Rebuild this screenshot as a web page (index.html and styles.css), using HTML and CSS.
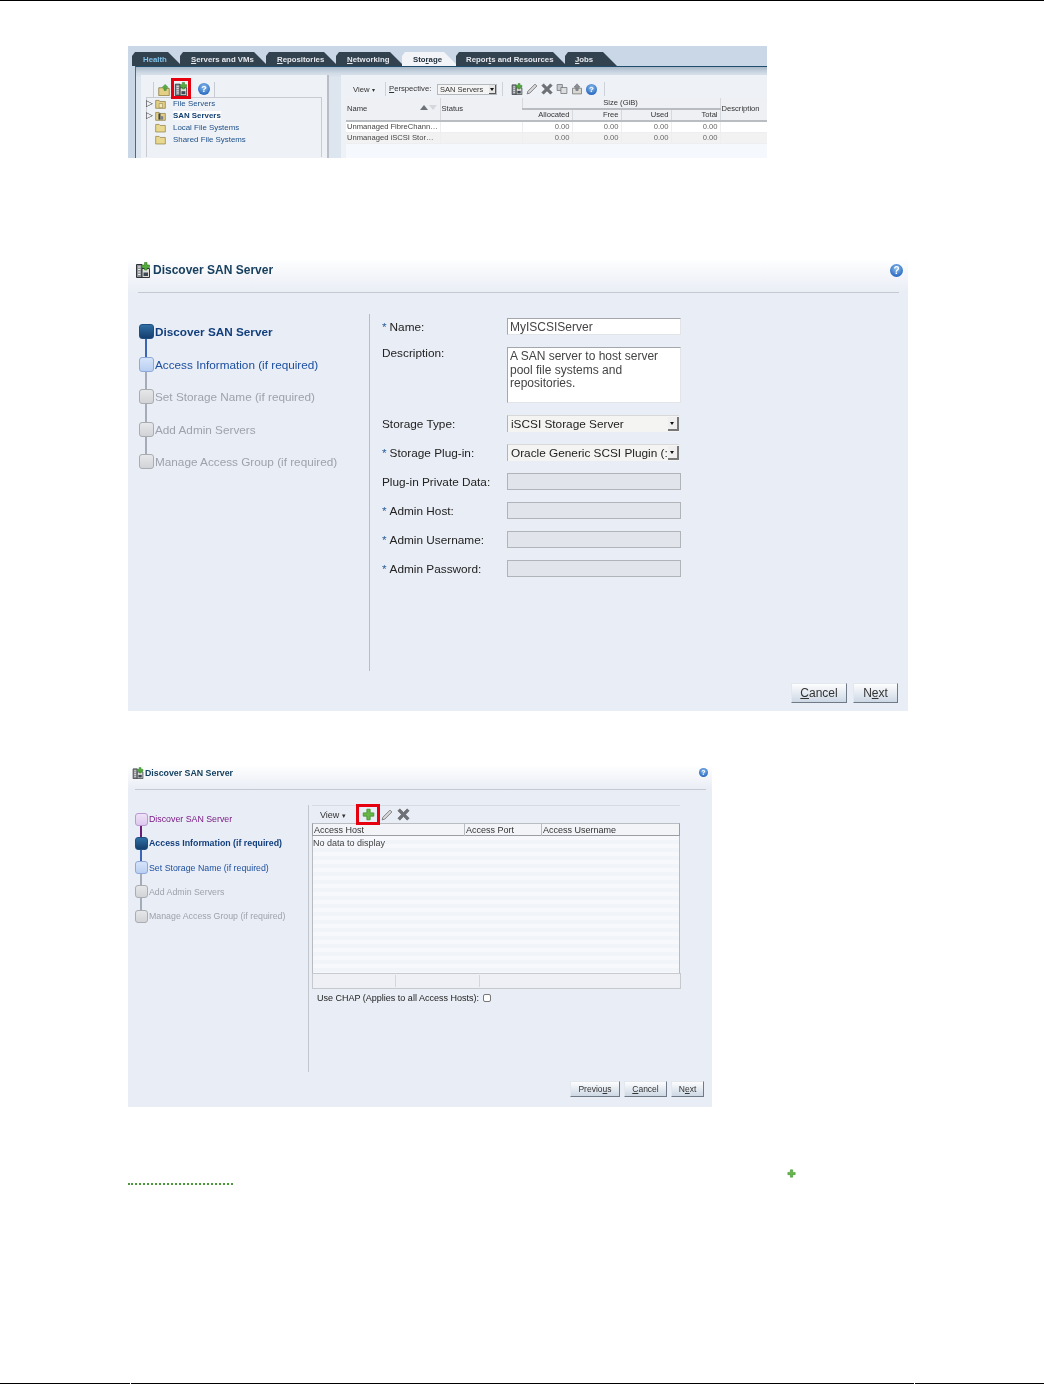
FILE: index.html
```html
<!DOCTYPE html>
<html lang="en">
<head>
<meta charset="utf-8">
<title>Discover SAN Server</title>
<link rel="stylesheet" href="styles.css">
</head>
<body>
<svg class="defs" width="0" height="0" aria-hidden="true">
  <symbol id="i-san" viewBox="0 0 16 16">
    <path d="M1.500 2.500h5.500v13H1.500z" fill="#8d9299" stroke="#2f3338"/>
    <path d="M7 6.500h7.500v9H7z" fill="#dfe0d8" stroke="#2f3338"/>
    <path d="M3 5h2.500M3 7.500h2.500M3 10h2.500M3 12.500h2.500" stroke="#eeeeee"/>
    <path d="M8.500 10.500h4.500v3.500H8.500z" fill="#3f4854"/>
    <path d="M9.500 0.500h2.500v2.500h2.500v2.500H12V8H9.500V5.500H7V3h2.500z" fill="#54ac3c" stroke="#2f7d23" stroke-width=".6"/>
  </symbol>
  <symbol id="i-filesrv" viewBox="0 0 16 16">
    <path d="M1 3.500h5l1 1.500h8v10H1z" fill="#e3cf85" stroke="#85763c"/>
    <path d="M6 8h5v6H6z" fill="#f1e7bd" stroke="#85763c" stroke-width=".7"/>
  </symbol>
  <symbol id="i-sansrv" viewBox="0 0 16 16">
    <path d="M1 3.500h5l1 1.500h8v10H1z" fill="#e3cf85" stroke="#85763c"/>
    <path d="M5 5h3v9H5z" fill="#3c4148"/>
    <path d="M8 9h4v5H8z" fill="#7b818a"/>
  </symbol>
  <symbol id="i-folder" viewBox="0 0 16 16">
    <path d="M1 3.500h5l1.500 1.500H15v9.500H1z" fill="#e9d88f" stroke="#8b7c41"/>
  </symbol>
  <symbol id="i-up" viewBox="0 0 16 16">
    <path d="M1 5h5l1 1h8v9.500H1z" fill="#e3cf85" stroke="#85763c"/>
    <path d="M9.500 .5l4 4H11v4H8v-4H5.500z" fill="#58ad3f" stroke="#2f7d23" stroke-width=".6"/>
  </symbol>
  <symbol id="i-plus" viewBox="0 0 16 16">
    <path d="M6 1.500h4v4.500h4.500v4H10v4.500H6V10H1.500V6H6z" fill="#67b849" stroke="#3f8f2c"/>
  </symbol>
  <symbol id="i-pencil" viewBox="0 0 16 16">
    <path d="M12 1.500l2.500 2.500L5 13.500l-3.500 1 1-3.500z" fill="#d8d8d8" stroke="#6e7072" stroke-width="1.100"/>
  </symbol>
  <symbol id="i-x" viewBox="0 0 16 16">
    <path d="M3.500 1L8 5.500 12.500 1 15 3.500 10.500 8l4.500 4.500-2.500 2.500L8 10.500 3.500 15 1 12.500 5.500 8 1 3.500z" fill="#6f7276" stroke="#54575a" stroke-width=".6"/>
  </symbol>
  <symbol id="i-copy" viewBox="0 0 16 16">
    <path d="M1.500 2h7v8h-7z" fill="#c9ccd0" stroke="#6e7072"/>
    <path d="M6.500 6h8v8h-8z" fill="#dcdee0" stroke="#6e7072"/>
  </symbol>
  <symbol id="i-export" viewBox="0 0 16 16">
    <path d="M2 7h12v7.500H2z" fill="#d8d8d0" stroke="#6e7072"/>
    <path d="M8 1l4 4.500H9.500V10h-3V5.500H4z" fill="#8d9094" stroke="#55585b" stroke-width=".6"/>
  </symbol>
</svg>

<main class="page">

  <section class="shot shot-one">
    <nav class="tabs">
      <span class="tab tab-health"><span class="tab-label">Health</span></span>
      <span class="tab tab-servers"><span class="tab-label"><u>S</u>ervers and VMs</span></span>
      <span class="tab tab-repos"><span class="tab-label"><u>R</u>epositories</span></span>
      <span class="tab tab-net"><span class="tab-label"><u>N</u>etworking</span></span>
      <span class="tab tab-storage"><span class="tab-label">Sto<u>r</u>age</span></span>
      <span class="tab tab-reports"><span class="tab-label">Repor<u>t</u>s and Resources</span></span>
      <span class="tab tab-jobs"><span class="tab-label"><u>J</u>obs</span></span>
    </nav>
    <div class="one-body">
      <aside class="one-left">
        <div class="one-tools">
          <svg class="ic12 tool-up"><use href="#i-up"/></svg>
          <span class="redbox redbox-one"><svg class="ic14"><use href="#i-san"/></svg></span>
          <span class="help help-one">?</span>
        </div>
        <ul class="tree">
          <li><span class="twist">▷</span><svg class="ic12"><use href="#i-filesrv"/></svg><span class="tree-label">File Servers</span></li>
          <li><span class="twist">▷</span><svg class="ic12"><use href="#i-sansrv"/></svg><span class="tree-label tree-selected">SAN Servers</span></li>
          <li><span class="twist"></span><svg class="ic12"><use href="#i-folder"/></svg><span class="tree-label">Local File Systems</span></li>
          <li><span class="twist"></span><svg class="ic12"><use href="#i-folder"/></svg><span class="tree-label">Shared File Systems</span></li>
        </ul>
      </aside>
      <div class="one-right">
        <div class="one-bar">
          <span class="one-view">View <span class="caret">▾</span></span>
          <span class="one-persp"><u>P</u>erspective:</span>
          <span class="one-select">SAN Servers<span class="one-arrow"></span></span>
          <span class="one-icons">
            <svg class="ic12"><use href="#i-san"/></svg>
            <svg class="ic12"><use href="#i-pencil"/></svg>
            <svg class="ic12"><use href="#i-x"/></svg>
            <svg class="ic12"><use href="#i-copy"/></svg>
            <svg class="ic12"><use href="#i-export"/></svg>
            <span class="help help-bar">?</span>
          </span>
        </div>
        <table class="one-table">
          <colgroup>
            <col class="c-name"><col class="c-status"><col class="c-size"><col class="c-size2"><col class="c-size"><col class="c-size2"><col>
          </colgroup>
          <thead>
            <tr>
              <th rowspan="2" class="th-left">Name<span class="sort"><i class="sort-up"></i><i class="sort-down"></i></span></th>
              <th rowspan="2" class="th-left">Status</th>
              <th colspan="4" class="th-mid">Size (GiB)</th>
              <th rowspan="2" class="th-left">Description</th>
            </tr>
            <tr><th class="th-num">Allocated</th><th class="th-num">Free</th><th class="th-num">Used</th><th class="th-num">Total</th></tr>
          </thead>
          <tbody>
            <tr><td>Unmanaged FibreChann…</td><td></td><td class="num">0.00</td><td class="num">0.00</td><td class="num">0.00</td><td class="num">0.00</td><td></td></tr>
            <tr class="alt"><td>Unmanaged iSCSI Stor…</td><td></td><td class="num">0.00</td><td class="num">0.00</td><td class="num">0.00</td><td class="num">0.00</td><td></td></tr>
          </tbody>
        </table>
        <div class="one-fill"></div>
      </div>
    </div>
  </section>

  <section class="shot shot-two">
    <header class="dlg-head">
      <svg class="ic16"><use href="#i-san"/></svg>
      <h2 class="dlg-title">Discover SAN Server</h2>
      <span class="help help-two">?</span>
    </header>
    <hr class="dlg-rule">
    <div class="dlg-main">
      <ol class="train">
        <li class="step step-current">Discover SAN Server</li>
        <li class="step step-next">Access Information (if required)</li>
        <li class="step">Set Storage Name (if required)</li>
        <li class="step">Add Admin Servers</li>
        <li class="step step-last">Manage Access Group (if required)</li>
      </ol>
      <form class="form">
        <label class="lbl"><b class="req">*</b> Name:</label>
        <div class="field field-text">MyISCSIServer</div>
        <label class="lbl lbl-top">Description:</label>
        <div class="field field-text field-area">A SAN server to host server pool file systems and repositories.</div>
        <label class="lbl">Storage Type:</label>
        <div class="field field-select"><span class="select-text">iSCSI Storage Server</span><span class="select-arrow"></span></div>
        <label class="lbl"><b class="req">*</b> Storage Plug-in:</label>
        <div class="field field-select"><span class="select-text">Oracle Generic SCSI Plugin (:</span><span class="select-arrow"></span></div>
        <label class="lbl">Plug-in Private Data:</label>
        <div class="field field-off"></div>
        <label class="lbl"><b class="req">*</b> Admin Host:</label>
        <div class="field field-off"></div>
        <label class="lbl"><b class="req">*</b> Admin Username:</label>
        <div class="field field-off"></div>
        <label class="lbl"><b class="req">*</b> Admin Password:</label>
        <div class="field field-off"></div>
      </form>
    </div>
    <footer class="actions">
      <button class="btn btn-cancel" type="button"><u>C</u>ancel</button>
      <button class="btn btn-next" type="button">N<u>e</u>xt</button>
    </footer>
  </section>

  <section class="shot shot-three">
    <header class="dlg-head">
      <svg class="ic12"><use href="#i-san"/></svg>
      <h2 class="dlg-title">Discover SAN Server</h2>
      <span class="help help-three">?</span>
    </header>
    <hr class="dlg-rule">
    <div class="dlg-main">
      <ol class="train">
        <li class="step step-visited">Discover SAN Server</li>
        <li class="step step-current">Access Information (if required)</li>
        <li class="step step-next">Set Storage Name (if required)</li>
        <li class="step">Add Admin Servers</li>
        <li class="step step-last">Manage Access Group (if required)</li>
      </ol>
      <div class="access">
        <div class="access-bar">
          <span class="access-view">View <span class="caret">▾</span></span>
          <span class="redbox redbox-three"><svg class="ic13"><use href="#i-plus"/></svg></span>
          <svg class="ic12 bar-pencil"><use href="#i-pencil"/></svg>
          <svg class="ic13 bar-x"><use href="#i-x"/></svg>
        </div>
        <div class="access-head">
          <span class="access-th">Access Host</span>
          <span class="access-th">Access Port</span>
          <span class="access-th">Access Username</span>
        </div>
        <div class="access-body">No data to display</div>
        <div class="access-foot"><span></span><span></span><span></span></div>
        <div class="chap">Use CHAP (Applies to all Access Hosts):<span class="check"></span></div>
      </div>
    </div>
    <footer class="actions">
      <button class="btn btn-prev" type="button">Previo<u>u</u>s</button>
      <button class="btn btn-cancel" type="button"><u>C</u>ancel</button>
      <button class="btn btn-next" type="button">N<u>e</u>xt</button>
    </footer>
  </section>

  <div class="note">
    <span class="note-link"></span>
    <svg class="note-plus"><use href="#i-plus"/></svg>
  </div>

  <footer class="page-foot"><span></span><span></span><span></span></footer>
</main>
</body>
</html>
```
FILE: styles.css
```css
* { box-sizing: border-box; }
html, body { margin: 0; padding: 0; background: #fff; }
body { font-family: "Liberation Sans", Arial, sans-serif; color: #222; overflow: hidden; }
.defs { position: absolute; }
.page { height: 1384px; border-top: 1px solid #000; display: flex; flex-direction: column; position: relative; }
.shot { margin-left: 128px; flex: none; overflow: hidden; background: #e9edf5; }
ul, ol { list-style: none; margin: 0; padding: 0; }
svg { display: block; flex: none; }
.ic12 { width: 12px; height: 12px; }
.ic13 { width: 13px; height: 13px; }
.ic14 { width: 14px; height: 14px; }
.ic16 { width: 16px; height: 16px; }

.help { display: block; flex: none; border-radius: 50%; color: #fff; font-weight: 700; text-align: center;
  background: radial-gradient(circle at 50% 35%, #8fc0ee, #2f6fc4 70%, #1f4f9a); }
.help-one { width: 12px; height: 12px; font-size: 9px; line-height: 12px; margin: 1px 0 0 7px; }
.help-bar { width: 11px; height: 11px; font-size: 8px; line-height: 11px; }
.help-two { width: 13px; height: 13px; font-size: 10px; line-height: 13px; margin-left: auto; }
.help-three { width: 9px; height: 9px; font-size: 7px; line-height: 9px; margin-left: auto; }
.redbox { display: flex; align-items: center; justify-content: center; border: 3px solid #e6000f; flex: none; }
.caret { font-size: .8em; }

/* first screenshot */
.shot-one { width: 639px; height: 112px; margin-top: 45px; background: #c9d7e7; filter: blur(.35px); }
.tabs { height: 20px; padding: 6px 0 0 4px; display: flex; }
.tab { height: 14px; background: #33424f; color: #e6e9ee; font-size: 7.800px; font-weight: 700; line-height: 16px; margin-left: -2px;
  clip-path: polygon(0 100%, 0 4px, 3px 0, calc(100% - 14px) 0, 100% 100%); }
.tab-label { display: block; }
.tab-health { width: 50px; padding-left: 11px; margin-left: 0; color: #7fc2ea; }
.tab-servers { width: 88px; padding-left: 11px; }
.tab-repos { width: 72px; padding-left: 11px; }
.tab-net { width: 68px; padding-left: 11px; }
.tab-storage { width: 56px; padding-left: 11px; background: #f2f4f7; color: #22303c; }
.tab-reports { width: 111px; padding-left: 10px; }
.tab-jobs { width: 52px; padding-left: 10px; }
.tab u, .btn u, .one-persp u { text-underline-offset: 1px; }
.one-body { height: 92px; margin-left: 7px; padding: 8px 0 0 5px; display: flex; border-top: 1px solid #1f4d6e; border-left: 1px solid #3f6d8a;
  background: linear-gradient(#a9b8c7, #cfdae6 6px, #dde5ee 10px); }
.one-left { width: 188px; margin-right: 12px; background: #eef1f6; border-right: 2px solid #b9bec6; padding: 4px 0 0 5px; }
.one-tools { height: 15px; width: 62px; margin: 3px 0 0 7px; display: flex; align-items: flex-start; padding-left: 4px; border-left: 1px solid #c8ccd2; border-right: 1px solid #c8ccd2; }
.tool-up { margin-top: 2px; }
.redbox-one { width: 20px; height: 21px; margin: -4px 0 0 1px; position: relative; z-index: 1; }
.tree { background: #eef1f6; height: 60px; border-top: 1px solid #c8ccd2; border-left: 1px solid #c8ccd2; border-right: 1px solid #c8ccd2; margin-right: 5px; font-size: 7.900px; color: #1c4f88; }
.tree li { height: 12px; display: flex; align-items: center; margin-left: -1px; }
.tree li:first-child { margin-top: -1px; }
.twist { width: 7px; font-size: 8.500px; color: #333; line-height: 12px; flex: none; }
.tree .ic12 { width: 11px; height: 11px; margin-left: 2px; }
.tree-label { margin-left: 7px; white-space: nowrap; }
.tree-selected { font-weight: 700; color: #123f70; background: #fff; }
.one-right { flex: 1; background: #eef1f6; min-width: 0; }
.one-bar { height: 23px; display: flex; align-items: center; padding: 5px 0 0 12px; font-size: 7.700px; color: #333; }
.one-view { width: 32px; }
.one-persp { width: 52px; padding-left: 3px; border-left: 1px solid #cdd2d9; line-height: 14px; white-space: nowrap; }
.one-select { width: 60px; height: 11px; background: #f4f4f4; border: 1px solid #b5b8bc; font-size: 7.500px; line-height: 9px; padding-left: 2px; position: relative; white-space: nowrap; }
.one-arrow { position: absolute; right: 0; top: 0; width: 7px; height: 9px; background: #e6e6e6; border-right: 1px solid #555; border-bottom: 1px solid #555; }
.one-arrow::after { content: ""; position: absolute; left: 1px; top: 3px; border: 2px solid transparent; border-top: 3px solid #111; }
.one-icons { display: flex; align-items: center; gap: 3px; margin-left: 5px; padding: 0 7px 0 8px; border-left: 1px solid #cdd2d9; border-right: 1px solid #cdd2d9; height: 14px; }
.one-table { width: 422px; margin-left: 5px; border-collapse: collapse; table-layout: fixed; font-size: 7.600px; color: #444; }
.c-name { width: 94px; } .c-status { width: 82px; } .c-size { width: 50px; } .c-size2 { width: 49px; }
.one-table th { font-weight: 400; background: #eef0f4; padding: 0 2px 0 1px; color: #333; border-bottom: 2px solid #b9bcc1; white-space: nowrap; height: 11px; line-height: 10px; }
.one-table th + th { border-left: 1px solid #d5d8dc; }
.th-left { text-align: left; }
.th-mid { text-align: center; }
.th-num { text-align: right; }
.sort { float: right; display: flex; gap: 1px; margin: 1px 1px 0 0; }
.sort i { display: block; border: 4px solid transparent; border-top: 0; border-bottom: 5px solid #6d7278; }
.sort i.sort-down { border-bottom: 0; border-top: 5px solid #d4d7db; }
.one-table td { height: 11px; line-height: 10px; padding: 0 2px 0 1px; background: #fff; white-space: nowrap; overflow: hidden; border-bottom: 1px solid #eceef1; }
.one-table td + td { border-left: 1px solid #eceef0; }
.one-table .alt td { background: #f2f2f2; }
.num { text-align: right; color: #666; }
.one-fill { height: 16px; margin-left: 5px; background: #f5f8fc; }

/* wizard dialogs */
.dlg-head { display: flex; align-items: center; background: linear-gradient(#fff, #e9edf5); }
.dlg-title { margin: 0; font-weight: 700; color: #17405f; white-space: nowrap; }
.dlg-rule { border: 0; height: 1px; margin: 0; background: #c6cad0; }
.dlg-main { display: flex; }
.train { position: relative; flex: none; }
.step { display: flex; align-items: center; color: #9ea3ab; position: relative; white-space: nowrap; }
.step::before { content: ""; display: block; flex: none; border: 1px solid #a9acb1; border-radius: 3px; background: linear-gradient(#e6e7e9, #d2d3d6); position: relative; z-index: 1; }
.step::after { content: ""; position: absolute; background: #a5acb7; }
.step-last::after { display: none; }
.step-current { color: #123f7d; font-weight: 700; }
.step-current::before { background: linear-gradient(#2f6ea3, #143f6e); border-color: #1f4f82; }
.step-current::after { background: #3a66b5; }
.step-next { color: #1c4fa0; }
.step-next::before { background: linear-gradient(#d6e4fa, #b9cff2); border-color: #8ea9d8; }
.step-visited { color: #7a1a86; }
.step-visited::before { background: linear-gradient(#efe2f7, #dcc8ee); border-color: #b79ad0; }
.step-visited::after { background: #6d1a78; }
.btn { font-family: inherit; color: #333; padding: 0; border: 1px solid #e3e8ef; border-right-color: #6f7a86; border-bottom-color: #6f7a86;
  background: linear-gradient(#fdfdfe, #cdd8e5); }
.actions { display: flex; justify-content: flex-end; }

/* second screenshot */
.shot-two { width: 780px; height: 453px; margin-top: 100px; filter: blur(.2px); }
.shot-two .dlg-head { height: 34px; padding: 0 5px 10px 7px; gap: 2px; }
.shot-two .dlg-title { font-size: 12px; }
.shot-two .dlg-rule { margin: 0 9px 0 10px; }
.shot-two .dlg-main { margin-top: 21px; height: 357px; }
.shot-two .train { width: 241px; padding: 1.500px 0 0 11px; font-size: 11.750px; }
.shot-two .step { height: 32.500px; gap: 1px; }
.shot-two .step::before { width: 13px; height: 13px; }
.shot-two .step::after { left: 5.500px; top: 22px; width: 2px; height: 22px; }
.form { flex: 1; border-left: 1px solid #b9bdc3; padding: 4px 0 0 12px; display: grid; grid-template-columns: 125px 174px; grid-template-rows: 17px 56px repeat(6, 17px); row-gap: 12px; align-content: start; font-size: 11.800px; }
.lbl { display: flex; align-items: center; gap: 3px; white-space: nowrap; color: #222; }
.lbl-top { align-items: flex-start; margin-top: -1px; }
.req { color: #2a5f9e; font-weight: 400; }
.field { font-size: 12px; color: #444; }
.field-text { background: #fff; border: 1px solid #e2e4e8; border-top-color: #a3a6aa; border-left-color: #a3a6aa; padding: 1px 2px 0; line-height: 15px; }
.field-area { line-height: 13.500px; padding: 2px; }
.field-select { width: 172px; display: flex; align-items: center; background: #f4f4f2; border-left: 1px solid #b2b4b8; border-top: 1px solid #d8d8d8; padding-left: 3px; color: #222; font-size: 11.800px; }
.select-text { flex: 1; white-space: nowrap; min-width: 0; }
.select-arrow { flex: none; width: 11px; height: 14px; background: #efefef; border-right: 2px solid #777; border-bottom: 2px solid #777; position: relative; }
.select-arrow::after { content: ""; position: absolute; left: 2px; top: 5px; border: 2.500px solid transparent; border-top: 3px solid #111; }
.field-off { background: #e1e4ea; border: 1px solid #b0b3b7; }
.shot-two .actions { margin-top: 12px; padding-right: 10px; gap: 6px; }
.shot-two .btn { height: 20px; font-size: 12px; }
.shot-two .btn-cancel { width: 56px; }
.shot-two .btn-next { width: 45px; }

/* third screenshot */
.shot-three { width: 584px; height: 342px; margin-top: 54px; filter: blur(.3px); }
.shot-three .dlg-head { height: 24px; padding: 0 4px 9px 4px; gap: 1px; }
.shot-three .dlg-title { font-size: 8.800px; }
.shot-three .dlg-rule { margin: 0 6px 0 7px; }
.shot-three .dlg-main { margin-top: 15px; height: 267px; }
.shot-three .train { width: 180px; padding: 2px 0 0 7px; font-size: 8.800px; }
.shot-three .step { height: 24.250px; gap: 0; }
.shot-three .step::before { width: 11px; height: 11px; margin-right: 1px; }
.shot-three .step::after { left: 4.500px; top: 17px; width: 2px; height: 15px; }
.access { flex: 1; border-left: 1px solid #c3c7cd; padding-left: 3px; font-size: 9px; color: #333; }
.access-bar { width: 368px; height: 18px; border-top: 1px solid #d7dbe1; display: flex; align-items: center; padding-left: 8px; font-size: 9px; }
.access-view { width: 36px; }
.redbox-three { width: 24px; height: 21px; position: relative; z-index: 1; }
.bar-pencil { margin-left: 1px; }
.bar-x { margin-left: 4px; }
.access-head { width: 368px; height: 13px; display: grid; grid-template-columns: 151px 77px 1fr; background: #f2f4f7; border: 1px solid #9a9da1; border-top-color: #b9bcc0; line-height: 12px; }
.access-th { padding-left: 1px; }
.access-th + .access-th { border-left: 1px solid #b9bcc0; }
.access-body { width: 368px; height: 137px; border: 1px solid #b8bcc1; border-top: 0; border-bottom: 0; background: repeating-linear-gradient(#f6f8fb 0 4px, #f1f4f9 4px 8px); line-height: 14px; color: #444; }
.access-foot { width: 369px; height: 16px; display: grid; grid-template-columns: 82px 84px 1fr; background: #eef0f5; border: 1px solid #c6cace; padding: 1px 0; }
.access-foot span + span { border-left: 1px solid #d3d6da; }
.chap { display: flex; align-items: center; gap: 4px; height: 10px; margin: 4px 0 0 5px; color: #222; }
.check { width: 8px; height: 8px; border: 1px solid #777; border-radius: 2px; background: #fff; }
.shot-three .actions { margin-top: 9px; padding-right: 8px; gap: 4px; }
.shot-three .btn { height: 16px; font-size: 8.500px; }
.shot-three .btn-prev { width: 50px; }
.shot-three .btn-cancel { width: 43px; }
.shot-three .btn-next { width: 33px; }

/* remains of the page */
.note { margin: 62px 0 0 128px; display: flex; align-items: flex-start; height: 16px; }
.note-link { width: 105px; height: 16px; border-bottom: 2px dotted #4a9a3a; }
.note-plus { width: 9px; height: 9px; margin-left: 554px; }
.page-foot { margin-top: auto; height: 1px; display: grid; grid-template-columns: 130px 783px 1fr; column-gap: 1px; }
.page-foot span { background: #000; }
```
